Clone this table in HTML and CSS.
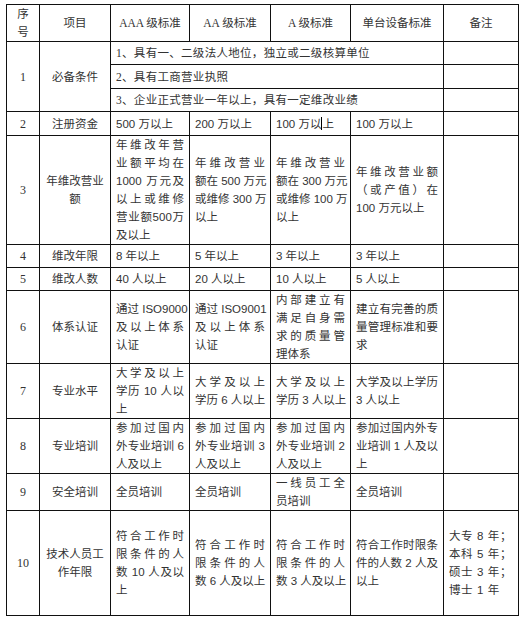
FILE: index.html
```html
<!DOCTYPE html>
<html lang="zh">
<head>
<meta charset="utf-8">
<title>维改单位资质标准</title>
<link rel="stylesheet" href="styles.css">
</head>
<body>
<table class="spec">
  <colgroup>
    <col class="c-no"><col class="c-item"><col class="c-aaa"><col class="c-aa"><col class="c-a"><col class="c-unit"><col class="c-note">
  </colgroup>
  <thead>
    <tr class="h-head">
      <th>序<br>号</th><th>项目</th><th>AAA 级标准</th><th>AA 级标准</th><th>A 级标准</th><th>单台设备标准</th><th>备注</th>
    </tr>
  </thead>
  <tbody>
    <tr class="h-r1a">
      <td class="no" rowspan="3">1</td><td class="item" rowspan="3">必备条件</td>
      <td class="serif" colspan="4">1、具有一、二级法人地位，独立或二级核算单位</td><td></td>
    </tr>
    <tr class="h-r1b"><td class="serif" colspan="4">2、具有工商营业执照</td><td></td></tr>
    <tr class="h-r1c"><td class="serif" colspan="4">3、企业正式营业一年以上，具有一定维改业绩</td><td></td></tr>
    <tr class="h-r2">
      <td class="no">2</td><td class="item">注册资金</td>
      <td>500 万以上</td><td>200 万以上</td><td>100 万以<span class="caret"></span>上</td><td>100 万以上</td><td></td>
    </tr>
    <tr class="h-r3">
      <td class="no">3</td><td class="item">年维改营业<br>额</td>
      <td><span class="j">年维改年营</span><span class="j">业额平均在</span><span class="j">1000 万元及</span><span class="j">以上或维修</span><span class="j">营业额500万</span><span class="l">及以上</span></td>
      <td><span class="j">年维改营业</span><span class="j">额在 500 万元</span><span class="j">或维修 300 万</span><span class="l">以上</span></td>
      <td><span class="j">年维改营业</span><span class="j">额在 300 万元</span><span class="j">或维修 100 万</span><span class="l">以上</span></td>
      <td><span class="j">年维改营业额</span><span class="j">（或产值）在</span><span class="l">100 万元以上</span></td>
      <td></td>
    </tr>
    <tr class="h-r4">
      <td class="no">4</td><td class="item">维改年限</td>
      <td>8 年以上</td><td>5 年以上</td><td>3 年以上</td><td>3 年以上</td><td></td>
    </tr>
    <tr class="h-r5">
      <td class="no">5</td><td class="item">维改人数</td>
      <td>40 人以上</td><td>20 人以上</td><td>10 人以上</td><td>5 人以上</td><td></td>
    </tr>
    <tr class="h-r6">
      <td class="no">6</td><td class="item">体系认证</td>
      <td><span class="j">通过 ISO9000</span><span class="j">及以上体系</span><span class="l">认证</span></td>
      <td><span class="j">通过 ISO9001</span><span class="j">及以上体系</span><span class="l">认证</span></td>
      <td><span class="j">内部建立有</span><span class="j">满足自身需</span><span class="j">求的质量管</span><span class="l">理体系</span></td>
      <td><span class="j">建立有完善的质</span><span class="j">量管理标准和要</span><span class="l">求</span></td>
      <td></td>
    </tr>
    <tr class="h-r7">
      <td class="no">7</td><td class="item">专业水平</td>
      <td><span class="j">大学及以上</span><span class="j">学历 10 人以</span><span class="l">上</span></td>
      <td><span class="j">大学及以上</span><span class="j">学历 6 人以上</span></td>
      <td><span class="j">大学及以上</span><span class="j">学历 3 人以上</span></td>
      <td><span class="j">大学及以上学历</span><span class="l">3 人以上</span></td>
      <td></td>
    </tr>
    <tr class="h-r8">
      <td class="no">8</td><td class="item">专业培训</td>
      <td><span class="j">参加过国内</span><span class="j">外专业培训 6</span><span class="l">人及以上</span></td>
      <td><span class="j">参加过国内</span><span class="j">外专业培训 3</span><span class="l">人及以上</span></td>
      <td><span class="j">参加过国内</span><span class="j">外专业培训 2</span><span class="l">人及以上</span></td>
      <td><span class="j">参加过国内外专</span><span class="j">业培训 1 人及以</span><span class="l">上</span></td>
      <td></td>
    </tr>
    <tr class="h-r9">
      <td class="no">9</td><td class="item">安全培训</td>
      <td>全员培训</td><td>全员培训</td>
      <td><span class="j">一线员工全</span><span class="l">员培训</span></td>
      <td>全员培训</td><td></td>
    </tr>
    <tr class="h-r10">
      <td class="no">10</td><td class="item">技术人员工<br>作年限</td>
      <td><span class="j">符合工作时</span><span class="j">限条件的人</span><span class="j">数 10 人及以</span><span class="l">上</span></td>
      <td><span class="j">符合工作时</span><span class="j">限条件的人</span><span class="j">数 6 人及以上</span></td>
      <td><span class="j">符合工作时</span><span class="j">限条件的人</span><span class="j">数 3 人及以上</span></td>
      <td><span class="j">符合工作时限条</span><span class="j">件的人数 2 人及</span><span class="l">以上</span></td>
      <td class="note"><span class="l">大专 8 年；</span><span class="l">本科 5 年；</span><span class="l">硕士 3 年；</span><span class="l">博士 1 年</span></td>
    </tr>
  </tbody>
</table>
</body>
</html>
```

FILE: styles.css
```css
* {
  box-sizing: border-box;
}

body {
  margin: 0;
  background: #ffffff;
}

.spec {
  border-collapse: collapse;
  table-layout: fixed;
  width: 512px;
  margin: 4px 0 0 6px;
  font-family: "Liberation Sans", "Noto Sans CJK SC", sans-serif;
  font-size: 11.5px;
  line-height: 18px;
  color: #333333;
}

.c-no { width: 33px; }
.c-item { width: 71px; }
.c-aaa { width: 79px; }
.c-aa { width: 81px; }
.c-a { width: 80px; }
.c-unit { width: 93px; }
.c-note { width: 75px; }

.spec th,
.spec td {
  border: 1px solid #111111;
  padding: 0 5px;
  vertical-align: middle;
  text-align: left;
  font-weight: normal;
  overflow: visible;
}

.spec th {
  text-align: center;
  font-family: "Liberation Serif", "Noto Sans CJK SC", serif;
}

.spec td.no {
  text-align: center;
  font-family: "Liberation Serif", "Noto Sans CJK SC", serif;
  font-size: 12px;
}

.spec td.item {
  text-align: center;
}

.spec td.serif {
  font-family: "Liberation Serif", "Noto Sans CJK SC", serif;
  letter-spacing: 0.3px;
}

.spec td.note {
  letter-spacing: 0.6px;
}

.j {
  display: block;
  white-space: nowrap;
  text-align: justify;
  text-align-last: justify;
}

.l {
  display: block;
  white-space: nowrap;
}

.caret {
  display: inline-block;
  width: 1px;
  height: 13px;
  background: #000000;
  vertical-align: -2px;
}

.h-head { height: 36px; }
.h-r1a { height: 23px; }
.h-r1b { height: 24px; }
.h-r1c { height: 23px; }
.h-r2 { height: 24px; }
.h-r3 { height: 108px; }
.h-r4 { height: 23px; }
.h-r5 { height: 23px; }
.h-r6 { height: 73px; }
.h-r7 { height: 54px; }
.h-r8 { height: 54px; }
.h-r9 { height: 36px; }
.h-r10 { height: 105px; }
```
